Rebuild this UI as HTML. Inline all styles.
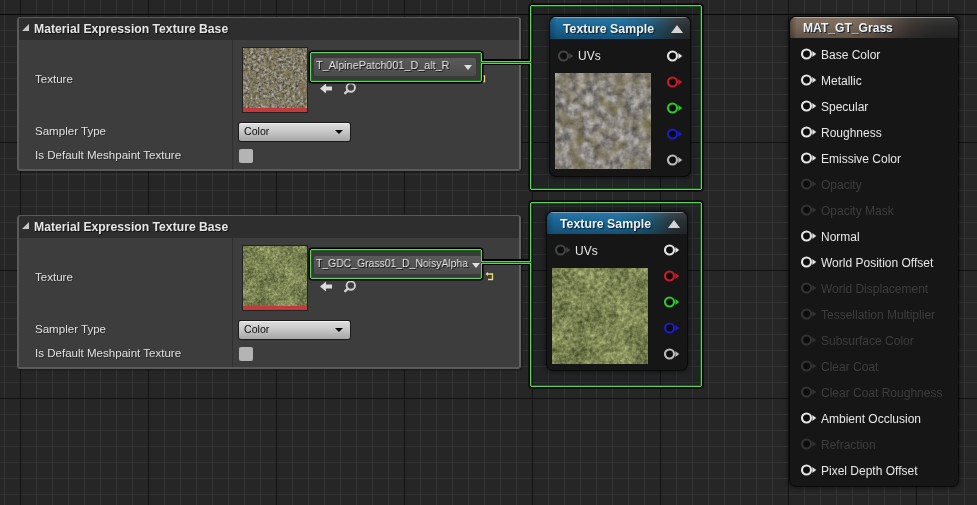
<!DOCTYPE html>
<html><head><meta charset="utf-8">
<style>
html,body{margin:0;padding:0;}
body{width:977px;height:505px;overflow:hidden;position:relative;font-family:"Liberation Sans",sans-serif;
background-color:#262626;
background-image:
 linear-gradient(to right, #131313 0, #131313 1px, transparent 1px),
 linear-gradient(to bottom, #131313 0, #131313 1px, transparent 1px),
 linear-gradient(to right, #333 0, #333 1px, transparent 1px),
 linear-gradient(to bottom, #333 0, #333 1px, transparent 1px);
background-size:128px 128px,128px 128px,16px 16px,16px 16px;
background-position:20px 0,0 14px,4px 0,0 14px;
}
.abs{position:absolute;}
.panel{position:absolute;left:17px;width:504px;height:154px;box-sizing:border-box;border-radius:3px;border:2px solid #5a5a5a;border-right-color:#626262;border-top-width:1px;background:#3d3d3d;box-shadow:1px 1px 2px rgba(0,0,0,0.45);}
.phead{position:absolute;left:0;top:0;right:0;height:22px;background:#2e2e2e;border-radius:2px 2px 0 0;}
.ptitle{position:absolute;left:15px;top:4px;font-size:12.2px;font-weight:bold;color:#e6e6e6;text-shadow:1px 1px 0 #111;white-space:nowrap;}
.tri{position:absolute;left:3px;top:6px;width:0;height:0;border-style:solid;border-width:0 0 7px 7px;border-color:transparent transparent #c8c8c8 transparent;}
.divider{position:absolute;left:213px;top:22px;bottom:0;width:1px;background:#303030;}
.lbl{position:absolute;left:16px;font-size:11.55px;color:#e0e0e0;text-shadow:1px 1px 0 rgba(0,0,0,0.35);white-space:nowrap;}
.thumb{position:absolute;width:64px;height:64px;box-shadow:0 0 0 1px #222;overflow:hidden;}
.thumb svg{display:block;}
.thumb .red{position:absolute;left:0;right:0;bottom:0;height:4px;background:#c43a3a;}
.gbox{position:absolute;left:310px;width:172px;height:30px;box-sizing:border-box;border-radius:2px;border:1px solid #62d662;box-shadow:inset 0 0 0 1px #0c700c, 0 0 0 1.5px #000;background:#3a3a3a;}
.combo{position:absolute;left:3px;top:5px;width:162px;height:18px;background:linear-gradient(#5a5a5a,#4c4c4c);border-radius:2px;}
.ctext{position:absolute;left:2px;top:1px;transform-origin:0 50%;font-size:10.6px;color:#e8e8e8;text-shadow:1px 1px 0 #111;white-space:nowrap;}
.cdrop{position:absolute;right:4px;top:7px;width:0;height:0;border-style:solid;border-width:5px 4px 0 4px;border-color:#e0e0e0 transparent transparent transparent;}
.wire{position:absolute;left:482px;width:48px;height:6px;background:#000;}
.wireg{position:absolute;left:481px;width:50px;height:3px;background:linear-gradient(#5ad45a 0,#5ad45a 1px,#0b6e0b 1px,#0b6e0b 2px,#6ec86e 2px);}
.combo2{position:absolute;left:220px;width:111px;height:18px;border-radius:2px;background:linear-gradient(#f0f0f0 0,#f0f0f0 1px,#dcdcdc 1px,#c6c6c6 50%,#a6a6a6);box-shadow:0 0 0 1px #1a1a1a;}
.combo2 .t{position:absolute;left:5px;top:2px;font-size:10.6px;color:#0c0c0c;}
.combo2 .d{position:absolute;right:7px;top:7px;width:0;height:0;border-style:solid;border-width:4px 4.5px 0 4.5px;border-color:#000 transparent transparent transparent;}
.chk{position:absolute;left:220px;width:14px;height:14px;border-radius:2px;background:#b4b4b4;}
.sel{position:absolute;left:530px;width:172px;box-sizing:border-box;border-radius:2px;background:rgba(0,8,16,0.1);border:1px solid #62d662;box-shadow:inset 0 0 0 1px #0a5e0a, 0 0 0 1.5px #000;}
.node{position:absolute;width:140px;border-radius:6px;background:#151615;box-shadow:0 0 0 1px rgba(0,0,0,0.6),0 0 4px 2px rgba(0,0,0,0.45);overflow:hidden;}
.nhead{position:absolute;left:0;top:0;right:0;height:22px;}
.nhead.blue{background:linear-gradient(to bottom,rgba(190,205,215,0.6) 0,rgba(190,205,215,0.6) 1px,rgba(255,255,255,0.08) 1px,rgba(0,0,0,0) 40%,rgba(0,0,0,0.22) 100%),linear-gradient(to right,#135078 0%,#1a6696 5%,#1b6a99 50%,#1a5a7e 70%,#224a5c 80%,#29363c 90%,#2b2e30 100%);}
.nhead.brown{height:21px;background:linear-gradient(to bottom,rgba(230,220,210,0.55) 0,rgba(230,220,210,0.55) 1px,rgba(255,255,255,0.06) 1px,rgba(0,0,0,0) 45%,rgba(0,0,0,0.22) 100%),linear-gradient(to right,#54463b 0%,#7a6858 4%,#7a6858 35%,#6e5e50 48%,#544840 60%,#3a3430 72%,#2c2c2c 86%,#2a2a2a 100%);}
.ntitle{position:absolute;left:12.5px;top:5px;font-size:12.1px;font-weight:bold;color:#eef2f4;text-shadow:1px 1px 1px #0a1a28;white-space:nowrap;}
.ntri{position:absolute;right:7px;top:8px;width:0;height:0;border-style:solid;border-width:0 6px 8px 6px;border-color:transparent transparent #d4d4d4 transparent;}
.ptxt{position:absolute;font-size:12px;line-height:14px;color:#e8e8e8;white-space:nowrap;}
.prev{position:absolute;width:96px;height:96px;overflow:hidden;}
.prev svg{display:block;}

.nhead.brown .ntitle{top:4px;}

.ptitle,.lbl,.ctext,.combo2 .t,.ntitle,.ptxt{will-change:transform;}

</style></head>
<body>
<div class="abs" style="left:0;top:14px;width:977px;height:1px;background:#070707"></div>
<svg width="0" height="0" style="position:absolute">
 <defs>
  <filter id="gravel" x="0" y="0" width="100%" height="100%" color-interpolation-filters="sRGB">
   <feTurbulence type="fractalNoise" baseFrequency="0.13" numOctaves="3" seed="4" result="n1"/>
   <feTurbulence type="fractalNoise" baseFrequency="0.07" numOctaves="2" seed="11" result="n2"/>
   <feColorMatrix in="n1" type="matrix" values="0.62 0 0 0 0.23  0.62 0 0 0 0.215  0.62 0 0 0 0.2  0 0 0 0 1" result="g1"/>
   <feColorMatrix in="n2" type="matrix" values="0 0 0 0 0.47  0 0 0 0 0.43  0 0 0 0 0.27  0 1.7 0 0 -0.72" result="ol"/>
   <feComposite in="ol" in2="g1" operator="over"/>
  </filter>
  <filter id="gravel_s" x="0" y="0" width="100%" height="100%" color-interpolation-filters="sRGB">
   <feTurbulence type="fractalNoise" baseFrequency="0.38" numOctaves="2" seed="4" result="n1"/>
   <feTurbulence type="fractalNoise" baseFrequency="0.14" numOctaves="2" seed="11" result="n2"/>
   <feColorMatrix in="n1" type="matrix" values="0.75 0 0 0 0.13  0.75 0 0 0 0.11  0.7 0 0 0 0.08  0 0 0 0 1" result="g1"/>
   <feColorMatrix in="n2" type="matrix" values="0 0 0 0 0.46  0 0 0 0 0.42  0 0 0 0 0.26  0 1.7 0 0 -0.7" result="ol"/>
   <feComposite in="ol" in2="g1" operator="over"/>
  </filter>
  <filter id="grass" x="0" y="0" width="100%" height="100%" color-interpolation-filters="sRGB">
   <feTurbulence type="fractalNoise" baseFrequency="0.26" numOctaves="3" seed="2" result="n1"/>
   <feTurbulence type="fractalNoise" baseFrequency="0.05" numOctaves="2" seed="7" result="n2"/>
   <feColorMatrix in="n1" type="matrix" values="0.45 0 0 0 0.1  0.45 0 0 0 0.08  0.36 0 0 0 0.065  0 0 0 0 1" result="c1"/>
   <feColorMatrix in="n2" type="matrix" values="0 0.34 0 0 0.07  0 0.34 0 0 0.125  0 0.26 0 0 0.03  0 0 0 0 1" result="c2"/>
   <feComposite in="c1" in2="c2" operator="arithmetic" k1="0" k2="1" k3="1" k4="-0.08"/>
  </filter>
  <filter id="grass_s" x="0" y="0" width="100%" height="100%" color-interpolation-filters="sRGB">
   <feTurbulence type="fractalNoise" baseFrequency="0.4" numOctaves="3" seed="2" result="n1"/>
   <feTurbulence type="fractalNoise" baseFrequency="0.075" numOctaves="2" seed="7" result="n2"/>
   <feColorMatrix in="n1" type="matrix" values="0.42 0 0 0 0.11  0.42 0 0 0 0.09  0.34 0 0 0 0.075  0 0 0 0 1" result="c1"/>
   <feColorMatrix in="n2" type="matrix" values="0 0.34 0 0 0.07  0 0.34 0 0 0.125  0 0.26 0 0 0.03  0 0 0 0 1" result="c2"/>
   <feComposite in="c1" in2="c2" operator="arithmetic" k1="0" k2="1" k3="1" k4="-0.08"/>
  </filter>
 </defs>
</svg>


<div class="panel" style="top:17px;">
 <div class="phead"><div class="tri"></div><div class="ptitle">Material Expression Texture Base</div></div>
 <div class="divider"></div>
 <div class="lbl" style="top:55px;">Texture</div>
 <div class="lbl" style="top:107px;">Sampler Type</div>
 <div class="lbl" style="top:131px;">Is Default Meshpaint Texture</div>
 <div class="combo2" style="top:105px;"><div class="t">Color</div><div class="d"></div></div>
 <div class="chk" style="top:131px;"></div>
</div>
<div class="thumb" style="left:243px;top:48px;"><svg width="64" height="64"><rect width="64" height="64" filter="url(#gravel_s)"/></svg><div class="red"></div></div>
<svg class="abs" style="left:319px;top:83px" width="40" height="12" viewBox="0 0 40 12">
 <path d="M1 5.5 L7 0.5 L7 3.5 L13 3.5 L13 7.5 L7 7.5 L7 10.5Z" fill="#dcdcdc"/>
 <circle cx="31.8" cy="4.6" r="4.2" fill="none" stroke="#d0d0d0" stroke-width="1.9"/>
 <path d="M28.8 7.6 L26.2 10.2" stroke="#d0d0d0" stroke-width="2.4" stroke-linecap="round"/>
</svg>
<svg class="abs" style="left:477px;top:74px" width="10" height="9" viewBox="0 0 10 9">
 <path d="M2 2 H7.5 V7.5 H3" fill="none" stroke="#e8e07a" stroke-width="1.3"/>
 <path d="M0.5 2 L3 0 L3 4Z" fill="#e8e07a"/>
</svg>
<div class="gbox" style="top:52px;"><div class="combo" style="width:162px;top:5px"><div class="cdrop" style="right:4px"></div><div class="ctext" style="font-size:11.5px;top:0.5px;transform:scaleX(0.94)">T_AlpinePatch001_D_alt_R</div></div></div>


<div class="panel" style="top:215px;">
 <div class="phead"><div class="tri"></div><div class="ptitle">Material Expression Texture Base</div></div>
 <div class="divider"></div>
 <div class="lbl" style="top:55px;">Texture</div>
 <div class="lbl" style="top:107px;">Sampler Type</div>
 <div class="lbl" style="top:131px;">Is Default Meshpaint Texture</div>
 <div class="combo2" style="top:105px;"><div class="t">Color</div><div class="d"></div></div>
 <div class="chk" style="top:131px;"></div>
</div>
<div class="thumb" style="left:243px;top:246px;"><svg width="64" height="64"><rect width="64" height="64" filter="url(#grass_s)"/></svg><div class="red"></div></div>
<svg class="abs" style="left:319px;top:281px" width="40" height="12" viewBox="0 0 40 12">
 <path d="M1 5.5 L7 0.5 L7 3.5 L13 3.5 L13 7.5 L7 7.5 L7 10.5Z" fill="#dcdcdc"/>
 <circle cx="31.8" cy="4.6" r="4.2" fill="none" stroke="#d0d0d0" stroke-width="1.9"/>
 <path d="M28.8 7.6 L26.2 10.2" stroke="#d0d0d0" stroke-width="2.4" stroke-linecap="round"/>
</svg>
<svg class="abs" style="left:485px;top:272px" width="10" height="9" viewBox="0 0 10 9">
 <path d="M2 2 H7.5 V7.5 H3" fill="none" stroke="#e8e07a" stroke-width="1.3"/>
 <path d="M0.5 2 L3 0 L3 4Z" fill="#e8e07a"/>
</svg>
<div class="gbox" style="top:249px;"><div class="combo" style="width:167px;top:6px"><div class="cdrop" style="right:1px"></div><div class="ctext" style="font-size:11.0px;top:1.2px;transform:scaleX(0.945)">T_GDC_Grass01_D_NoisyAlpha</div></div></div>

<div class="sel" style="top:5px;height:185px;"></div>
<div class="sel" style="top:202px;height:185px;"></div>
<div class="wire" style="top:59px;"></div><div class="wireg" style="top:61px;"></div>
<div class="wire" style="top:259px;"></div><div class="wireg" style="top:261px;"></div>

<div class="node" style="left:550px;top:17px;height:159px;">
 <div class="nhead blue"><div class="ntitle" style="font-size:12.35px">Texture Sample</div><div class="ntri"></div></div>
</div>
<svg class="abs" style="left:558px;top:49.5px" width="17" height="12" viewBox="0 0 17 12"><circle cx="5.5" cy="6" r="4.5" fill="#0e0e0e" stroke="#444" stroke-width="2.1"/><path d="M11.3 3 L15.3 6 L11.3 9Z" fill="#444"/></svg><div class="ptxt" style="left:577.5px;top:49.0px;">UVs</div><svg class="abs" style="left:666.5px;top:49.5px" width="17" height="12" viewBox="0 0 17 12"><circle cx="5.5" cy="6" r="4.5" fill="#0c0c0c" stroke="#e4e4e4" stroke-width="2.1"/><path d="M11.3 3 L15.3 6 L11.3 9Z" fill="#e4e4e4"/></svg><svg class="abs" style="left:666.5px;top:75.5px" width="17" height="12" viewBox="0 0 17 12"><circle cx="5.5" cy="6" r="4.5" fill="#0c0c0c" stroke="#cc1a2a" stroke-width="2.1"/><path d="M11.3 3 L15.3 6 L11.3 9Z" fill="#cc1a2a"/></svg><svg class="abs" style="left:666.5px;top:101.5px" width="17" height="12" viewBox="0 0 17 12"><circle cx="5.5" cy="6" r="4.5" fill="#0c0c0c" stroke="#2ac82a" stroke-width="2.1"/><path d="M11.3 3 L15.3 6 L11.3 9Z" fill="#2ac82a"/></svg><svg class="abs" style="left:666.5px;top:127.5px" width="17" height="12" viewBox="0 0 17 12"><circle cx="5.5" cy="6" r="4.5" fill="#0c0c0c" stroke="#1c1cc4" stroke-width="2.1"/><path d="M11.3 3 L15.3 6 L11.3 9Z" fill="#1c1cc4"/></svg><svg class="abs" style="left:666.5px;top:153.5px" width="17" height="12" viewBox="0 0 17 12"><circle cx="5.5" cy="6" r="4.5" fill="#0c0c0c" stroke="#bcbcbc" stroke-width="2.1"/><path d="M11.3 3 L15.3 6 L11.3 9Z" fill="#bcbcbc"/></svg><div class="prev" style="left:555px;top:73px;"><svg width="96" height="96"><rect width="96" height="96" filter="url(#gravel)"/></svg></div>

<div class="node" style="left:547px;top:212px;height:158px;">
 <div class="nhead blue"><div class="ntitle" style="font-size:12.35px">Texture Sample</div><div class="ntri"></div></div>
</div>
<svg class="abs" style="left:555px;top:244px" width="17" height="12" viewBox="0 0 17 12"><circle cx="5.5" cy="6" r="4.5" fill="#0e0e0e" stroke="#444" stroke-width="2.1"/><path d="M11.3 3 L15.3 6 L11.3 9Z" fill="#444"/></svg><div class="ptxt" style="left:574.5px;top:243.5px;">UVs</div><svg class="abs" style="left:663.5px;top:244px" width="17" height="12" viewBox="0 0 17 12"><circle cx="5.5" cy="6" r="4.5" fill="#0c0c0c" stroke="#e4e4e4" stroke-width="2.1"/><path d="M11.3 3 L15.3 6 L11.3 9Z" fill="#e4e4e4"/></svg><svg class="abs" style="left:663.5px;top:270px" width="17" height="12" viewBox="0 0 17 12"><circle cx="5.5" cy="6" r="4.5" fill="#0c0c0c" stroke="#cc1a2a" stroke-width="2.1"/><path d="M11.3 3 L15.3 6 L11.3 9Z" fill="#cc1a2a"/></svg><svg class="abs" style="left:663.5px;top:296px" width="17" height="12" viewBox="0 0 17 12"><circle cx="5.5" cy="6" r="4.5" fill="#0c0c0c" stroke="#2ac82a" stroke-width="2.1"/><path d="M11.3 3 L15.3 6 L11.3 9Z" fill="#2ac82a"/></svg><svg class="abs" style="left:663.5px;top:322px" width="17" height="12" viewBox="0 0 17 12"><circle cx="5.5" cy="6" r="4.5" fill="#0c0c0c" stroke="#1c1cc4" stroke-width="2.1"/><path d="M11.3 3 L15.3 6 L11.3 9Z" fill="#1c1cc4"/></svg><svg class="abs" style="left:663.5px;top:348px" width="17" height="12" viewBox="0 0 17 12"><circle cx="5.5" cy="6" r="4.5" fill="#0c0c0c" stroke="#bcbcbc" stroke-width="2.1"/><path d="M11.3 3 L15.3 6 L11.3 9Z" fill="#bcbcbc"/></svg><div class="prev" style="left:552px;top:268px;"><svg width="96" height="96"><rect width="96" height="96" filter="url(#grass)"/></svg></div>

<div class="node" style="left:790px;top:17px;width:168px;height:469px;">
 <div class="nhead brown"><div class="ntitle">MAT_GT_Grass</div></div>
</div>
<svg class="abs" style="left:801px;top:48.0px" width="17" height="12" viewBox="0 0 17 12"><circle cx="5.5" cy="6" r="4.5" fill="#0c0c0c" stroke="#e4e4e4" stroke-width="2.1"/><path d="M11.3 3 L15.3 6 L11.3 9Z" fill="#e4e4e4"/></svg>
<div class="ptxt" style="left:821px;top:48.0px;color:#e8e8e8">Base Color</div>
<svg class="abs" style="left:801px;top:74.0px" width="17" height="12" viewBox="0 0 17 12"><circle cx="5.5" cy="6" r="4.5" fill="#0c0c0c" stroke="#e4e4e4" stroke-width="2.1"/><path d="M11.3 3 L15.3 6 L11.3 9Z" fill="#e4e4e4"/></svg>
<div class="ptxt" style="left:821px;top:74.0px;color:#e8e8e8">Metallic</div>
<svg class="abs" style="left:801px;top:100.0px" width="17" height="12" viewBox="0 0 17 12"><circle cx="5.5" cy="6" r="4.5" fill="#0c0c0c" stroke="#e4e4e4" stroke-width="2.1"/><path d="M11.3 3 L15.3 6 L11.3 9Z" fill="#e4e4e4"/></svg>
<div class="ptxt" style="left:821px;top:100.0px;color:#e8e8e8">Specular</div>
<svg class="abs" style="left:801px;top:126.0px" width="17" height="12" viewBox="0 0 17 12"><circle cx="5.5" cy="6" r="4.5" fill="#0c0c0c" stroke="#e4e4e4" stroke-width="2.1"/><path d="M11.3 3 L15.3 6 L11.3 9Z" fill="#e4e4e4"/></svg>
<div class="ptxt" style="left:821px;top:126.0px;color:#e8e8e8">Roughness</div>
<svg class="abs" style="left:801px;top:152.0px" width="17" height="12" viewBox="0 0 17 12"><circle cx="5.5" cy="6" r="4.5" fill="#0c0c0c" stroke="#e4e4e4" stroke-width="2.1"/><path d="M11.3 3 L15.3 6 L11.3 9Z" fill="#e4e4e4"/></svg>
<div class="ptxt" style="left:821px;top:152.0px;color:#e8e8e8">Emissive Color</div>
<svg class="abs" style="left:801px;top:178.0px" width="17" height="12" viewBox="0 0 17 12"><circle cx="5.5" cy="6" r="4.5" fill="#0c0c0c" stroke="#333333" stroke-width="2.1"/><path d="M11.3 3 L15.3 6 L11.3 9Z" fill="#333333"/></svg>
<div class="ptxt" style="left:821px;top:178.0px;color:#3d3d3d">Opacity</div>
<svg class="abs" style="left:801px;top:204.0px" width="17" height="12" viewBox="0 0 17 12"><circle cx="5.5" cy="6" r="4.5" fill="#0c0c0c" stroke="#333333" stroke-width="2.1"/><path d="M11.3 3 L15.3 6 L11.3 9Z" fill="#333333"/></svg>
<div class="ptxt" style="left:821px;top:204.0px;color:#3d3d3d">Opacity Mask</div>
<svg class="abs" style="left:801px;top:230.0px" width="17" height="12" viewBox="0 0 17 12"><circle cx="5.5" cy="6" r="4.5" fill="#0c0c0c" stroke="#e4e4e4" stroke-width="2.1"/><path d="M11.3 3 L15.3 6 L11.3 9Z" fill="#e4e4e4"/></svg>
<div class="ptxt" style="left:821px;top:230.0px;color:#e8e8e8">Normal</div>
<svg class="abs" style="left:801px;top:256.0px" width="17" height="12" viewBox="0 0 17 12"><circle cx="5.5" cy="6" r="4.5" fill="#0c0c0c" stroke="#e4e4e4" stroke-width="2.1"/><path d="M11.3 3 L15.3 6 L11.3 9Z" fill="#e4e4e4"/></svg>
<div class="ptxt" style="left:821px;top:256.0px;color:#e8e8e8">World Position Offset</div>
<svg class="abs" style="left:801px;top:282.0px" width="17" height="12" viewBox="0 0 17 12"><circle cx="5.5" cy="6" r="4.5" fill="#0c0c0c" stroke="#333333" stroke-width="2.1"/><path d="M11.3 3 L15.3 6 L11.3 9Z" fill="#333333"/></svg>
<div class="ptxt" style="left:821px;top:282.0px;color:#3d3d3d">World Displacement</div>
<svg class="abs" style="left:801px;top:308.0px" width="17" height="12" viewBox="0 0 17 12"><circle cx="5.5" cy="6" r="4.5" fill="#0c0c0c" stroke="#333333" stroke-width="2.1"/><path d="M11.3 3 L15.3 6 L11.3 9Z" fill="#333333"/></svg>
<div class="ptxt" style="left:821px;top:308.0px;color:#3d3d3d">Tessellation Multiplier</div>
<svg class="abs" style="left:801px;top:334.0px" width="17" height="12" viewBox="0 0 17 12"><circle cx="5.5" cy="6" r="4.5" fill="#0c0c0c" stroke="#333333" stroke-width="2.1"/><path d="M11.3 3 L15.3 6 L11.3 9Z" fill="#333333"/></svg>
<div class="ptxt" style="left:821px;top:334.0px;color:#3d3d3d">Subsurface Color</div>
<svg class="abs" style="left:801px;top:360.0px" width="17" height="12" viewBox="0 0 17 12"><circle cx="5.5" cy="6" r="4.5" fill="#0c0c0c" stroke="#333333" stroke-width="2.1"/><path d="M11.3 3 L15.3 6 L11.3 9Z" fill="#333333"/></svg>
<div class="ptxt" style="left:821px;top:360.0px;color:#3d3d3d">Clear Coat</div>
<svg class="abs" style="left:801px;top:386.0px" width="17" height="12" viewBox="0 0 17 12"><circle cx="5.5" cy="6" r="4.5" fill="#0c0c0c" stroke="#333333" stroke-width="2.1"/><path d="M11.3 3 L15.3 6 L11.3 9Z" fill="#333333"/></svg>
<div class="ptxt" style="left:821px;top:386.0px;color:#3d3d3d">Clear Coat Roughness</div>
<svg class="abs" style="left:801px;top:412.0px" width="17" height="12" viewBox="0 0 17 12"><circle cx="5.5" cy="6" r="4.5" fill="#0c0c0c" stroke="#e4e4e4" stroke-width="2.1"/><path d="M11.3 3 L15.3 6 L11.3 9Z" fill="#e4e4e4"/></svg>
<div class="ptxt" style="left:821px;top:412.0px;color:#e8e8e8">Ambient Occlusion</div>
<svg class="abs" style="left:801px;top:438.0px" width="17" height="12" viewBox="0 0 17 12"><circle cx="5.5" cy="6" r="4.5" fill="#0c0c0c" stroke="#333333" stroke-width="2.1"/><path d="M11.3 3 L15.3 6 L11.3 9Z" fill="#333333"/></svg>
<div class="ptxt" style="left:821px;top:438.0px;color:#3d3d3d">Refraction</div>
<svg class="abs" style="left:801px;top:464.0px" width="17" height="12" viewBox="0 0 17 12"><circle cx="5.5" cy="6" r="4.5" fill="#0c0c0c" stroke="#e4e4e4" stroke-width="2.1"/><path d="M11.3 3 L15.3 6 L11.3 9Z" fill="#e4e4e4"/></svg>
<div class="ptxt" style="left:821px;top:464.0px;color:#e8e8e8">Pixel Depth Offset</div>

</body></html>
